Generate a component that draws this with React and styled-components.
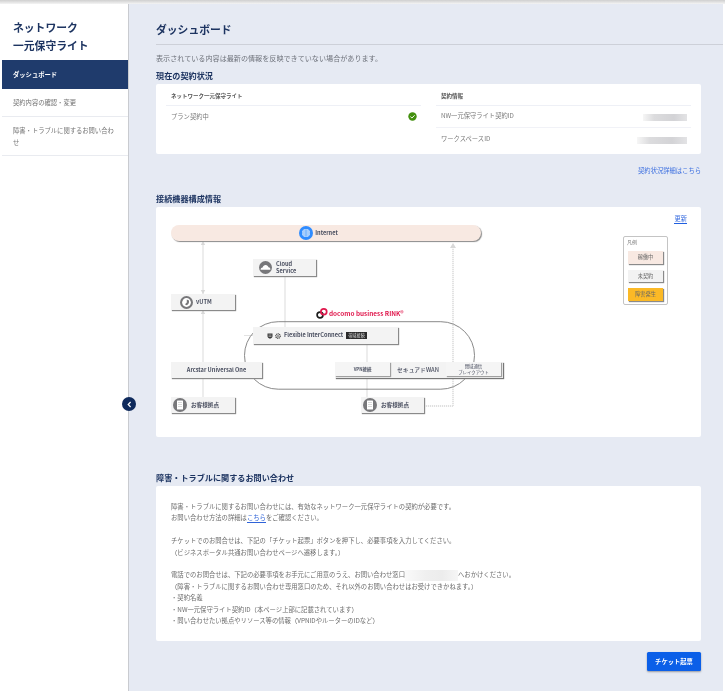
import styled, { createGlobalStyle } from 'styled-components';

const GlobalStyle = createGlobalStyle`
  html, body {
    margin: 0;
    padding: 0;
    background: #fff;
    font-family: "Noto Sans CJK JP", "Noto Sans", sans-serif;
  }
  * { box-sizing: border-box; }
`;

const navItems = [
  { label: 'ダッシュボード', active: true, height: 29 },
  { label: '契約内容の確認・変更', height: 28 },
  { label: '障害・トラブルに関するお問い合わせ', height: 39 },
];

function GlobeIcon() {
  return (
    <svg width="14" height="14" viewBox="0 0 14 14">
      <circle cx="7" cy="7" r="7" fill="#2f8cff" />
      <circle cx="7" cy="7" r="4" fill="#cfe3fd" />
      <path d="M3 7h8M7 3v8M4 5h6M4 9h6" stroke="#2f8cff" strokeWidth="0.5" />
    </svg>
  );
}

function CloudIcon() {
  return (
    <svg width="13" height="13" viewBox="0 0 13 13">
      <circle cx="6.5" cy="6.5" r="6.5" fill="#77777a" />
      <path d="M1.6 8.4c0-1.3 1-2 2-2 .4-1.5 1.6-2.4 3-2.4 1.5 0 2.6 1 2.9 2.3 1.1 0 1.9.8 1.9 2 0 .2 0 .3-.1.5H1.7c-.1-.1-.1-.2-.1-.4z" fill="#fff" />
    </svg>
  );
}

function ShieldIcon() {
  return (
    <svg width="13" height="13" viewBox="0 0 13 13">
      <circle cx="6.5" cy="6.5" r="6.5" fill="#77777a" />
      <circle cx="6.5" cy="6.5" r="4.4" fill="#fff" />
      <path d="M6.8 3.6l2.2.8v1.7c0 1.5-1 2.6-2.5 3.2-.6-.3-1.1-.6-1.5-1L6.8 6.6z" fill="#77777a" />
    </svg>
  );
}

function BuildingIcon() {
  return (
    <svg width="14" height="14" viewBox="0 0 14 14">
      <circle cx="7" cy="7" r="7" fill="#77777a" />
      <rect x="4" y="2.5" width="6" height="9" rx="0.5" fill="#fff" />
      <path d="M5 4.5h4M5 6.5h4M5 8.5h4" stroke="#c8c8c8" strokeWidth="0.7" />
    </svg>
  );
}

function CheckIcon() {
  return (
    <svg width="9" height="9" viewBox="0 0 9 9">
      <circle cx="4.5" cy="4.5" r="4.2" fill="#43900f" />
      <path d="M2.4 4.6l1.5 1.4 2.7-2.7" fill="none" stroke="#fff" strokeWidth="1" />
    </svg>
  );
}

function RinkLogo() {
  return (
    <svg width="12" height="11" viewBox="0 0 12 11">
      <circle cx="4" cy="7" r="2.9" fill="none" stroke="#1c1c1c" strokeWidth="1.7" />
      <circle cx="7.8" cy="3.8" r="2.9" fill="none" stroke="#e0184d" strokeWidth="1.7" />
    </svg>
  );
}

function FlexibleIcons() {
  return (
    <svg width="14" height="6" viewBox="0 0 14 6">
      <path d="M.5.6h5v2.6c0 1.2-1 2-2.5 2.6C1.5 5.2.5 4.4.5 3.2z" fill="#3a3a3a" />
      <path d="M1.5 2h3M1.5 3.4h3" stroke="#f3f3f3" strokeWidth="0.5" />
      <circle cx="11" cy="3" r="2.2" fill="none" stroke="#3a3a3a" strokeWidth="1.2" strokeDasharray="1 .5" />
      <circle cx="11" cy="3" r="0.8" fill="#3a3a3a" />
    </svg>
  );
}

// connection lines and the RINK outline of the diagram
function DiagramLines() {
  const line = { stroke: '#e2e2e2', strokeWidth: 1.2, fill: 'none' };
  return (
    <LinesSvg width="545" height="230" viewBox="0 0 545 230">
      <path d="M47 36v51M47 104v51M47 171v19M129 70v51M211 137v19M211 170v21M88 128.5H97" {...line} />
      <path d="M47 34l-2.2 4h4.4zM47 87l-2.2-4h4.4zM47 103l-2.2 4h4.4z" fill="#d8d8d8" />
      <path d="M297 40V199M268 199h29" fill="none" stroke="#e0e0e0" strokeWidth="1.8" strokeDasharray="1.2 .8" />
      <path d="M297 36l-3 5h6z" fill="#d8d8d8" />
      <rect x="88.5" y="114.7" width="230" height="67.5" rx="33.7" fill="none" stroke="#7c7c7c" strokeWidth="0.9" />
    </LinesSvg>
  );
}

export default function App() {
  return (
    <>
      <GlobalStyle />
      <Page>
        <TopShade />
        <Shell>
          <Sidebar>
            <AppTitle>ネットワーク<br />一元保守ライト</AppTitle>
            <nav>
              {navItems.map((item) => (
                <NavItem key={item.label} $active={item.active} $height={item.height}>
                  {item.label}
                </NavItem>
              ))}
            </nav>
          </Sidebar>
          <CollapseButton>
            <svg width="7" height="7" viewBox="0 0 7 7">
              <path d="M4.6 1L2.2 3.5l2.4 2.5" fill="none" stroke="#fff" strokeWidth="1.2" />
            </svg>
          </CollapseButton>
          <Main>
            <PageTitle>ダッシュボード</PageTitle>
            <Notice>表示されている内容は最新の情報を反映できていない場合があります。</Notice>
            <Section $top={7}>
              <SectionTitle>現在の契約状況</SectionTitle>
              <StatusCard>
                <StatusColumn>
                  <ColumnHead>ネットワーク一元保守ライト</ColumnHead>
                  <StatusRow>
                    <span>プラン契約中</span>
                    <CheckIcon />
                  </StatusRow>
                </StatusColumn>
                <StatusColumn>
                  <ColumnHead>契約情報</ColumnHead>
                  <StatusRow $ruled>
                    <span>NW一元保守ライト契約ID</span>
                    <Redacted $w={44} />
                  </StatusRow>
                  <StatusRow>
                    <span>ワークスペースID</span>
                    <Redacted $w={50} />
                  </StatusRow>
                </StatusColumn>
              </StatusCard>
              <DetailLink>契約状況詳細はこちら</DetailLink>
            </Section>
            <Section $top={16}>
              <SectionTitle>接続機器構成情報</SectionTitle>
              <DiagramCard>
                <DiagramLines />
                <InternetBar>
                  <GlobeIcon />
                  <span>Internet</span>
                </InternetBar>
                <Node $x={97} $y={52} $w={63} $h={17} $pad={6}>
                  <CloudIcon />
                  <NodeText>Cloud<br />Service</NodeText>
                </Node>
                <Node $x={15} $y={87} $w={64} $h={16} $pad={9} $gap={3}>
                  <ShieldIcon />
                  <NodeText>vUTM</NodeText>
                </Node>
                <RinkMark>
                  <RinkLogo />
                  <span>docomo business RINK®</span>
                </RinkMark>
                <Node $x={97} $y={120} $w={145} $h={17} $pad={14} $gap={3}>
                  <FlexibleIcons />
                  <FlexibleText>Flexible InterConnect</FlexibleText>
                  <Tag>帯域接続</Tag>
                </Node>
                <Node $x={15} $y={155} $w={91} $h={16} $center>
                  <NodeText>Arcstar Universal One</NodeText>
                </Node>
                <Node $x={15} $y={190} $w={64} $h={16} $pad={2}>
                  <BuildingIcon />
                  <NodeText>お客様拠点</NodeText>
                </Node>
                <WanGroup>
                  <WanCell>VPN接続</WanCell>
                  <WanLabel>セキュアドWAN</WanLabel>
                  <WanCell $wide>閉域通信<br />ブレイクアウト</WanCell>
                </WanGroup>
                <Node $x={205} $y={190} $w={63} $h={16} $pad={2}>
                  <BuildingIcon />
                  <NodeText>お客様拠点</NodeText>
                </Node>
                <UpdateLink>更新</UpdateLink>
                <Legend>
                  <LegendTitle>凡例</LegendTitle>
                  <LegendItem $bg="#f8e9e2">稼働中</LegendItem>
                  <LegendItem $bg="#f2f2f2">未契約</LegendItem>
                  <LegendItem $bg="#fbb926">障害発生</LegendItem>
                </Legend>
              </DiagramCard>
            </Section>
            <Section $top={35}>
              <SectionTitle>障害・トラブルに関するお問い合わせ</SectionTitle>
              <ContactCard>
                <ContactLine>障害・トラブルに関するお問い合わせには、有効なネットワーク一元保守ライトの契約が必要です。</ContactLine>
                <ContactLine>お問い合わせ方法の詳細は<InlineLink>こちら</InlineLink>をご確認ください。</ContactLine>
                <LineGap />
                <ContactLine>チケットでのお問合せは、下記の「チケット起票」ボタンを押下し、必要事項を入力してください。</ContactLine>
                <ContactLine>（ビジネスポータル共通お問い合わせページへ遷移します。）</ContactLine>
                <LineGap />
                <ContactLine>電話でのお問合せは、下記の必要事項をお手元にご用意のうえ、お問い合わせ窓口<Redacted $w={53} $inline />へおかけください。</ContactLine>
                <ContactLine>（障害・トラブルに関するお問い合わせ専用窓口のため、それ以外のお問い合わせはお受けできかねます。）</ContactLine>
                <ContactLine>・契約名義</ContactLine>
                <ContactLine>・NW一元保守ライト契約ID（本ページ上部に記載されています）</ContactLine>
                <ContactLine>・問い合わせたい拠点やリソース等の情報（VPNIDやルーターのIDなど）</ContactLine>
              </ContactCard>
            </Section>
            <ButtonRow>
              <TicketButton>チケット起票</TicketButton>
            </ButtonRow>
          </Main>
        </Shell>
      </Page>
    </>
  );
}

const Page = styled.div`
  width: 725px;
  height: 696px;
  overflow: hidden;
  background: #fff;
  filter: blur(0.3px);
`;

const TopShade = styled.div`
  height: 4px;
  background: linear-gradient(#cfcfcf, #f4f4f4);
`;

const Shell = styled.div`
  position: relative;
  display: flex;
  width: 721px;
  height: 687px;
  margin-left: 2px;
`;

const Sidebar = styled.aside`
  flex: 0 0 127px;
  background: #fff;
  border-right: 1px solid #c9cbd0;
`;

const AppTitle = styled.h1`
  margin: 0;
  padding: 14px 0 6px 11px;
  font-size: 10.8px;
  line-height: 18px;
  font-weight: 700;
  color: #1d3461;
`;

const NavItem = styled.div`
  display: flex;
  align-items: center;
  height: ${(p) => p.$height}px;
  padding: 1px 10px 0 11px;
  font-size: 6.3px;
  line-height: 12px;
  color: ${(p) => (p.$active ? '#fff' : '#727272')};
  font-weight: ${(p) => (p.$active ? 700 : 400)};
  background: ${(p) => (p.$active ? '#1f3b6c' : '#fff')};
  border-bottom: 1px solid ${(p) => (p.$active ? '#1f3b6c' : '#e9ebf0')};
`;

const CollapseButton = styled.div`
  position: absolute;
  left: 120px;
  top: 393px;
  display: flex;
  align-items: center;
  justify-content: center;
  width: 14px;
  height: 14px;
  border-radius: 50%;
  background: #0f2a5c;
`;

const Main = styled.main`
  flex: 1;
  padding: 0 22px 0 27px;
  background: #e6eaf3;
`;

const PageTitle = styled.h2`
  margin: 0 -22px 0 0;
  height: 41px;
  padding-top: 16px;
  font-size: 10.8px;
  line-height: 18px;
  font-weight: 700;
  color: #1d3461;
  border-bottom: 1px solid #cdd0d8;
`;

const Notice = styled.p`
  margin: 8px 0 0;
  font-size: 7.1px;
  line-height: 10px;
  color: #6f737c;
`;

const Section = styled.section`
  margin-top: ${(p) => p.$top}px;
`;

const SectionTitle = styled.h3`
  margin: 0 0 2px;
  font-size: 8.15px;
  line-height: 12px;
  font-weight: 700;
  color: #1d3461;
`;

const StatusCard = styled.div`
  display: grid;
  grid-template-columns: 255px 255px;
  justify-content: space-between;
  height: 70px;
  padding: 0 10px;
  background: #fff;
  border-radius: 2px;
`;

const StatusColumn = styled.div`
  display: flex;
  flex-direction: column;
`;

const ColumnHead = styled.div`
  height: 22px;
  padding: 8px 5px 0;
  font-size: 5.5px;
  line-height: 9px;
  font-weight: 700;
  color: #555;
  border-bottom: 1px solid #eef0f6;
`;

const StatusRow = styled.div`
  display: flex;
  align-items: center;
  justify-content: space-between;
  height: 22px;
  padding: 0 4px 2px 5px;
  font-size: 6.3px;
  color: #7a7a7a;
  border-bottom: ${(p) => (p.$ruled ? '1px solid #f1f2f7' : 'none')};
`;

const Redacted = styled.span`
  display: ${(p) => (p.$inline ? 'inline-block' : 'block')};
  width: ${(p) => p.$w}px;
  height: ${(p) => (p.$inline ? 11 : 7)}px;
  margin-top: ${(p) => (p.$inline ? 0 : 4)}px;
  vertical-align: middle;
  background: ${(p) =>
    p.$inline
      ? 'linear-gradient(90deg, #fafafa, #efefef 40%, #ececec 70%, #f6f6f6)'
      : 'linear-gradient(90deg, #f6f6f6, #dcdcde 25%, #d3d3d6 70%, #e3e3e5)'};
`;

const DetailLink = styled.div`
  margin-top: 11px;
  text-align: right;
  font-size: 6.3px;
  line-height: 12px;
  color: #3c6fe0;
`;

const DiagramCard = styled.div`
  position: relative;
  height: 230px;
  background: #fff;
  border-radius: 2px;
`;

const LinesSvg = styled.svg`
  position: absolute;
  left: 0;
  top: 0;
`;

const InternetBar = styled.div`
  position: absolute;
  left: 15px;
  top: 18px;
  display: flex;
  align-items: center;
  justify-content: center;
  gap: 2px;
  width: 310px;
  height: 16px;
  padding-right: 15px;
  border-radius: 8px;
  background: #f8e9e2;
  box-shadow: 1px 1px 1px #8a8a8a;
  font-size: 5.6px;
  font-weight: 700;
  color: #4a4f60;
`;

const Node = styled.div`
  position: absolute;
  left: ${(p) => p.$x}px;
  top: ${(p) => p.$y}px;
  display: flex;
  align-items: center;
  justify-content: ${(p) => (p.$center ? 'center' : 'flex-start')};
  gap: ${(p) => p.$gap || 4}px;
  width: ${(p) => p.$w}px;
  height: ${(p) => p.$h}px;
  padding: 0 0 0 ${(p) => p.$pad || 0}px;
  background: #f3f3f3;
  box-shadow: 1px 1px 1px #8a8a8a;
`;

const NodeText = styled.span`
  font-size: 5.6px;
  line-height: 6.5px;
  font-weight: 700;
  color: #4a4f60;
`;

const FlexibleText = styled(NodeText)`
  white-space: nowrap;
`;

const Tag = styled.span`
  padding: 1px 2px;
  background: #2b2b2b;
  color: #ddd;
  font-size: 4.2px;
  line-height: 5px;
  white-space: nowrap;
`;

const RinkMark = styled.div`
  position: absolute;
  left: 160px;
  top: 101px;
  display: flex;
  align-items: center;
  gap: 1px;
  font-size: 6.4px;
  font-weight: 700;
  color: #e0184d;
  white-space: nowrap;
`;

const WanGroup = styled.div`
  position: absolute;
  left: 179px;
  top: 155px;
  display: flex;
  justify-content: space-between;
  width: 168px;
  height: 16px;
  padding-right: 2px;
  background: #f3f3f3;
  box-shadow: 1px 1px 1px #777;
`;

const WanCell = styled.div`
  display: flex;
  align-items: center;
  justify-content: center;
  width: 55px;
  height: 14px;
  text-align: center;
  background: #f5f5f5;
  box-shadow: 1px 1px 1px #a0a0a0;
  font-size: 4.4px;
  line-height: 6.5px;
  font-weight: ${(p) => (p.$wide ? 400 : 700)};
  color: #4a4f60;
`;

const WanLabel = styled.div`
  font-size: 5.8px;
  line-height: 15px;
  font-weight: 500;
  color: #4a4f60;
`;

const UpdateLink = styled.a`
  position: absolute;
  right: 14px;
  top: 8px;
  font-size: 6.3px;
  line-height: 8px;
  color: #3c6fe0;
  border-bottom: 1px solid #1f5fe0;
`;

const Legend = styled.div`
  position: absolute;
  left: 467px;
  top: 29px;
  display: flex;
  flex-direction: column;
  gap: 6px;
  width: 45px;
  height: 69px;
  padding: 2px 4px 0;
  background: #fff;
  border: 1px solid #c4c4c4;
  border-radius: 2px;
`;

const LegendTitle = styled.div`
  height: 6px;
  margin: 0 0 0 -1px;
  font-size: 5px;
  line-height: 6px;
  color: #777;
`;

const LegendItem = styled.div`
  height: 12.5px;
  font-size: 5.2px;
  line-height: 12.5px;
  text-align: center;
  color: #666;
  background: ${(p) => p.$bg};
  box-shadow: 1px 1px 1px #8a8a8a;
`;

const ContactCard = styled.div`
  height: 155px;
  padding: 15px 15px 0;
  background: #fff;
  border-radius: 2px;
`;

const ContactLine = styled.div`
  height: 11.4px;
  font-size: 6.33px;
  line-height: 11.4px;
  color: #6c6c6c;
  white-space: nowrap;
`;

const LineGap = styled.div`
  height: 11.4px;
`;

const InlineLink = styled.span`
  color: #2f63d8;
  border-bottom: 1px solid #2f63d8;
`;

const ButtonRow = styled.div`
  display: flex;
  justify-content: flex-end;
  margin-top: 11px;
`;

const TicketButton = styled.button`
  width: 54px;
  height: 19px;
  padding: 0;
  border: none;
  border-radius: 1.5px;
  background: #0b5fe8;
  box-shadow: 0 1px 2px rgba(0, 0, 0, 0.35);
  color: #fff;
  font-family: inherit;
  font-size: 6.3px;
  font-weight: 700;
`;
